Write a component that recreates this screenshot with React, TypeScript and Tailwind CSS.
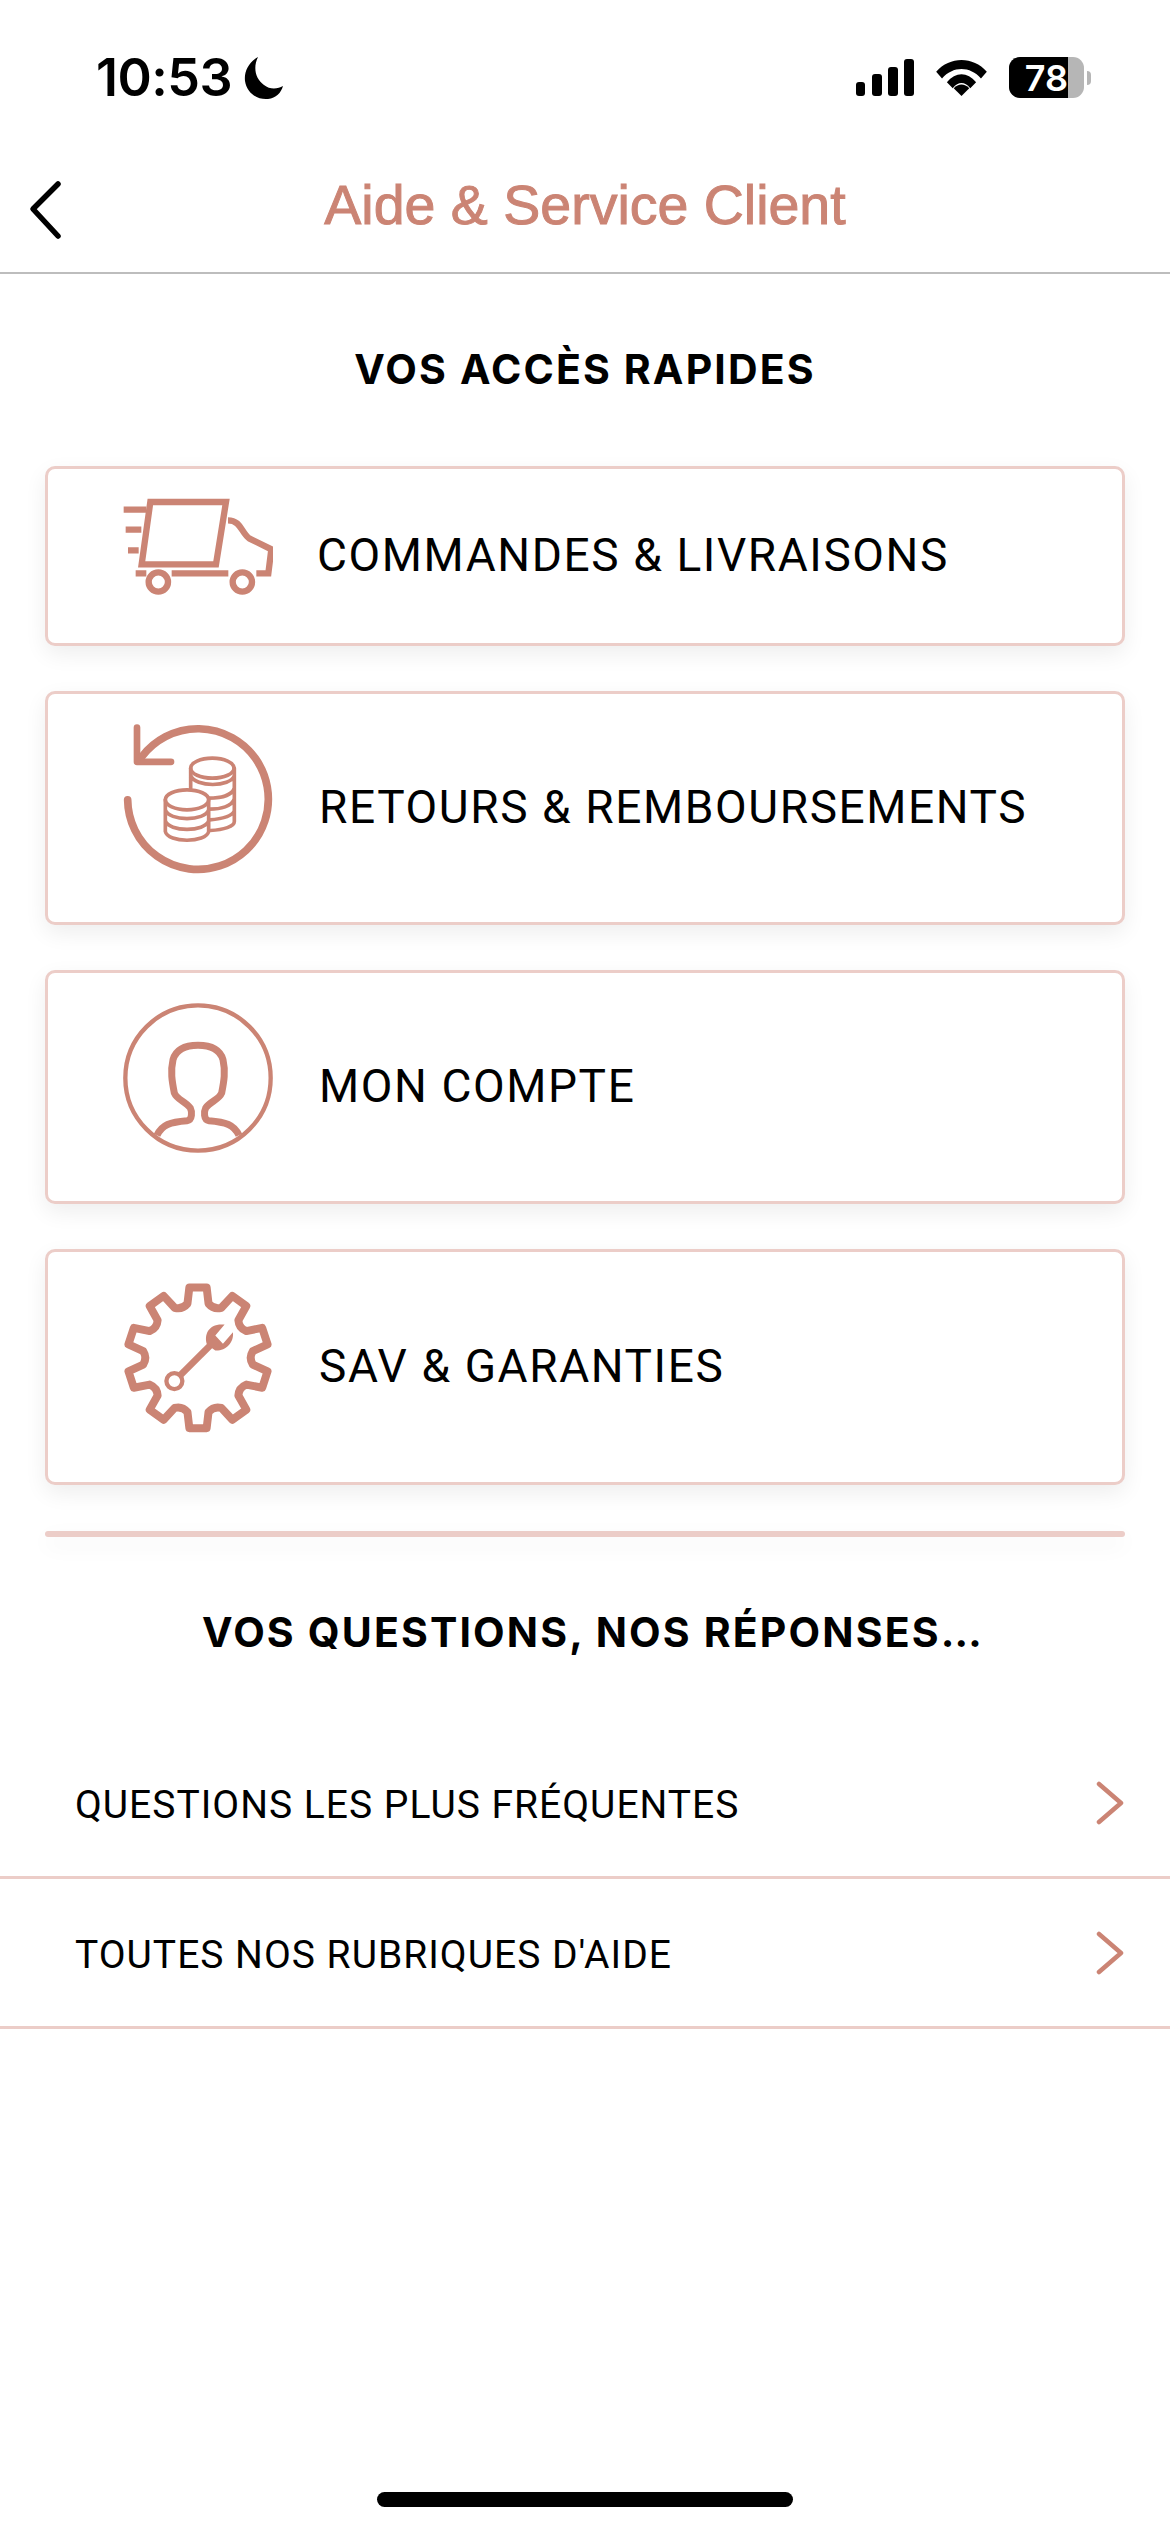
const C = "#cb8474";

function Truck() {
  return (
    <svg width="150" height="100" viewBox="280 140 450 300" fill="none" stroke={C} strokeWidth="19">
      <path d="M362 155H589L559 342H336Z" />
      <path d="M282 178H350M288 238H335M295 300H327M318 369H350M426 369H596M680 369H716L725 297L660 265C635 250 635 210 595 210" />
      <circle cx="386" cy="395" r="29" />
      <circle cx="638" cy="395" r="29" />
    </svg>
  );
}

function Coins() {
  return (
    <svg width="150" height="151" viewBox="278 128 450 452" fill="none" stroke={C} strokeLinecap="round" strokeLinejoin="round">
      <path d="M320 138V241H422" strokeWidth="20" />
      <path d="M292 355A211 211 0 1 0 335 225" strokeWidth="23" />
      <g strokeWidth="11">
        <ellipse cx="546" cy="260" rx="65" ry="30" />
        <path d="M481 260V320M612 260V420C612 435 580 445 540 447M481 282C495 318 600 318 612 282M535 350C570 350 605 342 612 320M538 383C570 383 605 375 612 352M538 415C575 412 605 405 612 388" />
        <ellipse cx="470" cy="355" rx="65" ry="30" fill="#fff" />
        <path d="M405 355V450C412 485 528 485 535 450V355M405 385C415 420 525 420 535 385M405 418C415 452 525 452 535 418" />
      </g>
    </svg>
  );
}

function Person() {
  return (
    <svg width="150" height="150" viewBox="278 125 450 450" fill="none" stroke={C}>
      <circle cx="503" cy="350" r="218" strokeWidth="13" />
      <path
        d="M380 522C395 490 420 482 470 478C487 476 485 450 480 440C465 420 440 415 432 395C425 360 420 330 428 295C438 262 470 252 503 252C536 252 568 262 578 295C586 330 581 360 574 395C566 415 540 420 526 440C521 450 519 476 536 478C586 482 611 490 626 522"
        strokeWidth="21"
      />
    </svg>
  );
}

const polar = (r: number, deg: number) => {
  const a = (deg * Math.PI) / 180;
  return `${(503 + r * Math.cos(a)).toFixed(1)} ${(350 + r * Math.sin(a)).toFixed(1)}`;
};

const gearPath = (() => {
  let d = "";
  for (let i = 0; i < 10; i++) {
    const a = -90 + 36 * i;
    d += `${i === 0 ? "M" : "L"}${polar(166, a - 11)}L${polar(213, a - 7)}L${polar(213, a + 7)}L${polar(166, a + 11)}Q${polar(152, a + 18)} ${polar(166, a + 25)}`;
  }
  return d + "Z";
})();

function Gear() {
  return (
    <svg width="150" height="153" viewBox="278 122 450 460" fill="none" stroke={C}>
      <path d={gearPath} strokeWidth="24" strokeLinejoin="round" />
      <circle cx="432" cy="420" r="24" strokeWidth="13" />
      <path d="M450 402L548 304" strokeWidth="20" />
      <path d="M583 250L555 283L578 308L608 273C612 305 585 330 555 328L530 310C520 280 535 245 583 250Z" fill={C} stroke="none" />
    </svg>
  );
}

function Card({ h, label, icon, mt, gap }: { h: string; label: string; icon: React.ReactNode; mt: string; gap: string }) {
  return (
    <div className={`mx-[45px] flex items-center rounded-[10px] border-[3px] border-[#eccdc8] bg-white pl-[75px] shadow-[0_8px_22px_rgba(0,0,0,0.07)] ${h} ${mt}`}>
      <div className="mb-[18px] flex w-[150px] shrink-0 justify-center">{icon}</div>
      <span className={`mb-[2px] font-['Roboto',sans-serif] text-[46px] tracking-[1.6px] text-black ${gap}`}>{label}</span>
    </div>
  );
}

function Row({ label }: { label: string }) {
  return (
    <div className="flex h-[150px] items-center justify-between border-b-[3px] border-[#eccdc8] pr-[46px] pl-[75px]">
      <span className="mt-[6px] font-['Roboto',sans-serif] text-[39px] tracking-[1px] text-black">{label}</span>
      <svg width="28" height="44" viewBox="0 0 28 44" fill="none" stroke={C} strokeWidth="4.5" strokeLinecap="round" strokeLinejoin="round">
        <path d="M3 3L25 22L3 41" />
      </svg>
    </div>
  );
}

export default function App() {
  return (
    <div className="h-[2532px] w-[1170px] overflow-hidden bg-white font-['Inter',sans-serif]">
      <div className="flex h-[154px] items-start justify-between pt-[48px] pr-[79px] pl-[96px]">
        <div className="flex items-center gap-[12px]">
          <span className="text-[52px] leading-[60px] font-semibold tracking-[-0.5px] text-black">10:53</span>
          <svg width="40" height="44" viewBox="0 0 40 44" fill="#000"><path d="M14 1C4 7 0 16 1 25C3 37 13 44 24 43C32 42 37 37 39 30C34 33 26 34 20 29C11 23 9 11 14 1Z" /></svg>
        </div>
        <div className="flex items-center gap-[22px] pt-[9px]">
          <svg width="58" height="37" viewBox="0 0 58 37" fill="#000">
            <rect x="0" y="23" width="9" height="14" rx="3" />
            <rect x="16" y="15" width="10" height="22" rx="3" />
            <rect x="32" y="8" width="10" height="29" rx="3" />
            <rect x="48" y="0" width="10" height="37" rx="3" />
          </svg>
          <svg width="51" height="37" viewBox="0 0 52 38" fill="#000">
            <path d="M0 13C14 -3 38 -3 52 13L46 20C35 7 17 7 6 20Z" />
            <path d="M11 24C20 13 32 13 41 24L35 30C29 23 23 23 17 30Z" />
            <path d="M18 30C23 25 29 25 34 30L26 38Z" />
          </svg>
          <div className="flex items-center">
            <div className="flex h-[41px] w-[75px] overflow-hidden rounded-[11px] bg-[#b6b6b6]">
              <div className="flex h-full w-[59px] items-center justify-end overflow-hidden bg-black text-[36px] font-semibold tracking-[0px] text-white">78</div>
            </div>
            <div className="ml-[3px] h-[14px] w-[4px] rounded-r-[4px] bg-[#b6b6b6]"></div>
          </div>
        </div>
      </div>
      <div className="relative flex h-[120px] items-center justify-center border-b-[2px] border-[#bdbdbd] pb-[14px]">
        <svg className="absolute top-[26px] left-[28px]" width="36" height="60" viewBox="0 0 36 60" fill="none" stroke="#000" strokeWidth="5.5" strokeLinecap="round" strokeLinejoin="round">
          <path d="M30 4L5 29L30 56" />
        </svg>
        <span className="font-['Liberation_Sans',sans-serif] text-[55.5px] leading-none text-[#cb8474] [-webkit-text-stroke:1px_#cb8474]">Aide &amp; Service Client</span>
      </div>
      <h2 className="mt-[70px] text-center text-[41px] leading-[50px] font-bold tracking-[2.15px] text-black">VOS ACCÈS RAPIDES</h2>
      <Card mt="mt-[72px]" h="h-[180px]" label="COMMANDES & LIVRAISONS" icon={<Truck />} gap="ml-[44px]" />
      <Card mt="mt-[45px]" h="h-[234px]" label="RETOURS & REMBOURSEMENTS" icon={<Coins />} gap="ml-[46px]" />
      <Card mt="mt-[45px]" h="h-[234px]" label="MON COMPTE" icon={<Person />} gap="ml-[46px]" />
      <Card mt="mt-[45px]" h="h-[236px]" label="SAV & GARANTIES" icon={<Gear />} gap="ml-[46px]" />
      <div className="mx-[45px] mt-[46px] h-[6px] rounded-[3px] bg-[#eccdc8] shadow-[0_8px_22px_rgba(0,0,0,0.07)]"></div>
      <h2 className="mt-[70px] pl-[16px] text-center text-[41px] leading-[50px] font-bold tracking-[2.15px] text-black">VOS QUESTIONS, NOS RÉPONSES…</h2>
      <div className="mt-[72px]">
        <Row label="QUESTIONS LES PLUS FRÉQUENTES" />
        <Row label="TOUTES NOS RUBRIQUES D'AIDE" />
      </div>
      <div className="mx-auto mt-[463px] h-[15px] w-[416px] rounded-full bg-black"></div>
    </div>
  );
}
